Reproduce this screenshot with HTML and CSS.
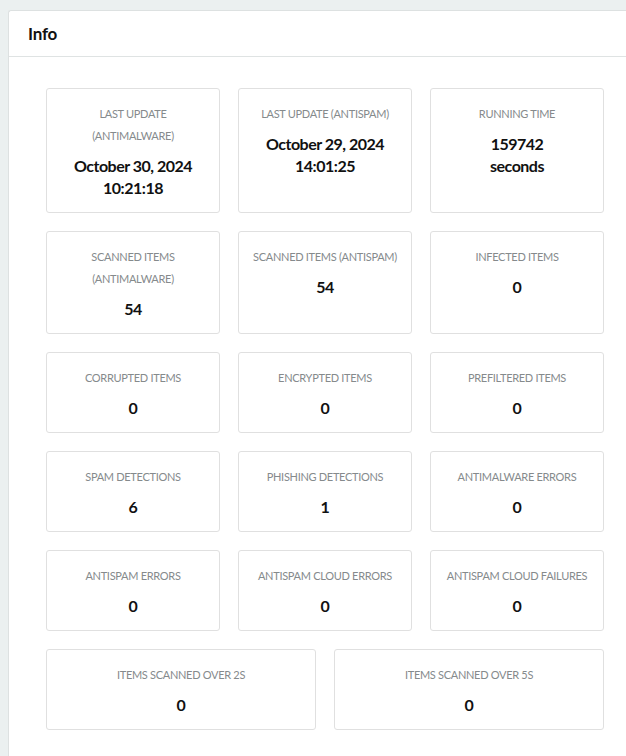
FILE: index.html
```html
<!doctype html>
<html>
  <head>
    <meta charset="UTF-8">
    <title>Info</title>
    <link rel="stylesheet" href="styles.css">
  </head>
  <body>
    <div class="panel">
      <div class="panel-head">
        <h3>Info</h3>
      </div>
      <div class="panel-body">
        <div class="grid">
          <div class="stat">
            <div class="label">Last update<br>(antimalware)</div>
            <div class="value">October 30, 2024<br>10:21:18</div>
          </div>
          <div class="stat">
            <div class="label">Last update (antispam)</div>
            <div class="value">October 29, 2024<br>14:01:25</div>
          </div>
          <div class="stat">
            <div class="label">Running time</div>
            <div class="value">159742<br>seconds</div>
          </div>

          <div class="stat">
            <div class="label">Scanned items<br>(antimalware)</div>
            <div class="value">54</div>
          </div>
          <div class="stat">
            <div class="label">Scanned items (antispam)</div>
            <div class="value">54</div>
          </div>
          <div class="stat">
            <div class="label">Infected items</div>
            <div class="value">0</div>
          </div>

          <div class="stat">
            <div class="label">Corrupted items</div>
            <div class="value">0</div>
          </div>
          <div class="stat">
            <div class="label">Encrypted items</div>
            <div class="value">0</div>
          </div>
          <div class="stat">
            <div class="label">Prefiltered items</div>
            <div class="value">0</div>
          </div>

          <div class="stat">
            <div class="label">Spam detections</div>
            <div class="value">6</div>
          </div>
          <div class="stat">
            <div class="label">Phishing detections</div>
            <div class="value">1</div>
          </div>
          <div class="stat">
            <div class="label">Antimalware errors</div>
            <div class="value">0</div>
          </div>

          <div class="stat">
            <div class="label">Antispam errors</div>
            <div class="value">0</div>
          </div>
          <div class="stat">
            <div class="label">Antispam cloud errors</div>
            <div class="value">0</div>
          </div>
          <div class="stat">
            <div class="label">Antispam cloud failures</div>
            <div class="value">0</div>
          </div>
        </div>

        <div class="grid two">
          <div class="stat">
            <div class="label">Items scanned over 2s</div>
            <div class="value">0</div>
          </div>
          <div class="stat">
            <div class="label">Items scanned over 5s</div>
            <div class="value">0</div>
          </div>
        </div>
      </div>
    </div>

    <div class="footer">
      <div class="rule"></div>
      <span class="footer-text">T</span>
    </div>
  </body>
</html>
```

FILE: styles.css
```css
* {
  box-sizing: border-box;
}

body {
  margin: 0;
  background: #ebf0f0;
  font-family: Lato, "Liberation Sans", sans-serif;
  color: #111;
  overflow: hidden;
}

/* Info panel */
.panel {
  margin: 10px 0 0 8px;
  width: 634px;
  background: #fff;
  border: 1px solid #dde1e1;
  border-right: 0;
  border-radius: 3px 0 0 0;
}

.panel-head {
  height: 46px;
  padding: 0 19px;
  display: flex;
  align-items: center;
  border-bottom: 1px solid #dfe3e3;
}

.panel-head h3 {
  margin: 0;
  font-size: 17px;
  font-weight: 700;
  letter-spacing: -0.2px;
}

.panel-body {
  padding: 31px 37px 10px 37px;
}

/* Stat cards */
.grid {
  display: grid;
  grid-template-columns: repeat(3, 174px);
  column-gap: 18px;
  row-gap: 18px;
  margin-bottom: 18px;
}

.grid.two {
  grid-template-columns: repeat(2, 270px);
}

.stat {
  border: 1px solid #e0e0e0;
  border-radius: 3px;
  padding: 14px 4px 13px;
  text-align: center;
}

.label {
  font-size: 11px;
  line-height: 22px;
  text-transform: uppercase;
  letter-spacing: -0.3px;
  color: #858a8c;
}

.value {
  margin-top: 8px;
  font-size: 16px;
  line-height: 22px;
  font-weight: 700;
  letter-spacing: -0.5px;
}

/* Footer */
.footer {
  display: flex;
  align-items: center;
  margin: 11px 0 0 8px;
}

.rule {
  width: 602px;
  border-top: 1px solid #cdd3d3;
}

.footer-text {
  margin-left: 11px;
  font-size: 11px;
  color: #666;
}
```
